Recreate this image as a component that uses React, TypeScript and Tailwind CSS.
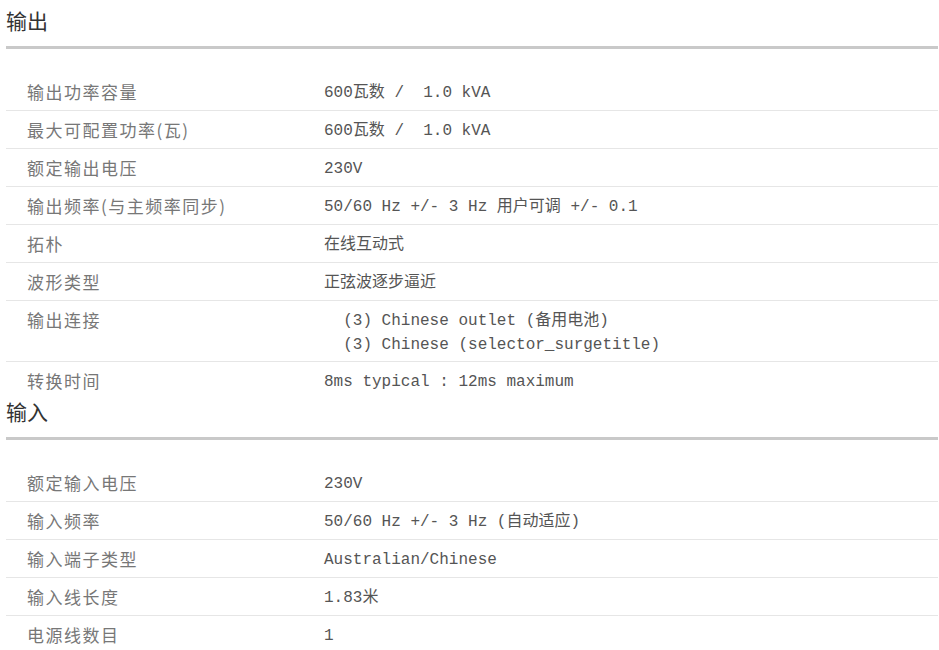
const output = [
  { label: '输出功率容量', value: ['600瓦数 /  1.0 kVA'] },
  { label: '最大可配置功率(瓦)', value: ['600瓦数 /  1.0 kVA'] },
  { label: '额定输出电压', value: ['230V'] },
  { label: '输出频率(与主频率同步)', value: ['50/60 Hz +/- 3 Hz 用户可调 +/- 0.1'] },
  { label: '拓朴', value: ['在线互动式'] },
  { label: '波形类型', value: ['正弦波逐步逼近'] },
  { label: '输出连接', value: ['  (3) Chinese outlet (备用电池)', '  (3) Chinese (selector_surgetitle)'] },
  { label: '转换时间', value: ['8ms typical : 12ms maximum'] },
]

const input = [
  { label: '额定输入电压', value: ['230V'] },
  { label: '输入频率', value: ['50/60 Hz +/- 3 Hz (自动适应)'] },
  { label: '输入端子类型', value: ['Australian/Chinese'] },
  { label: '输入线长度', value: ['1.83米'] },
  { label: '电源线数目', value: ['1'] },
]

type Row = { label: string; value: string[] }

function SpecSection({ title, rows }: { title: string; rows: Row[] }) {
  return (
    <section>
      <h2 className="h-[24px] text-[21px] leading-[24px] text-[#333] font-['Noto_Sans_CJK_SC',sans-serif]">{title}</h2>
      <div className="mt-[14px] h-[3px] bg-[#c9c9c9]" />
      <div className="mt-[24px]">
        {rows.map((r, i) => (
          <div
            key={r.label}
            className={`grid grid-cols-[318px_1fr] pt-[8px] ${r.value.length > 1 ? 'pb-[4px]' : 'pb-[5px]'} ${i < rows.length - 1 ? 'border-b border-[#e6e6e6]' : ''}`}>
            <div className="h-[24px] pl-[21px] text-[17px] leading-[22px] tracking-[1.5px] text-[#777] font-['Noto_Sans_CJK_SC',sans-serif]">
              {r.label}
            </div>
            <div className="text-[16px] text-[#555] whitespace-pre font-['Liberation_Mono','Noto_Sans_CJK_SC',monospace]">
              {r.value.map((v) => (
                <div key={v} className="h-[24px] leading-[24px]">
                  {v}
                </div>
              ))}
            </div>
          </div>
        ))}
      </div>
    </section>
  )
}

function App() {
  return (
    <div className="w-[939px] h-[650px] overflow-hidden bg-white pt-[8px] pl-[6px] pr-[1px]">
      <SpecSection title="输出" rows={output} />
      <SpecSection title="输入" rows={input} />
    </div>
  )
}

export default App
